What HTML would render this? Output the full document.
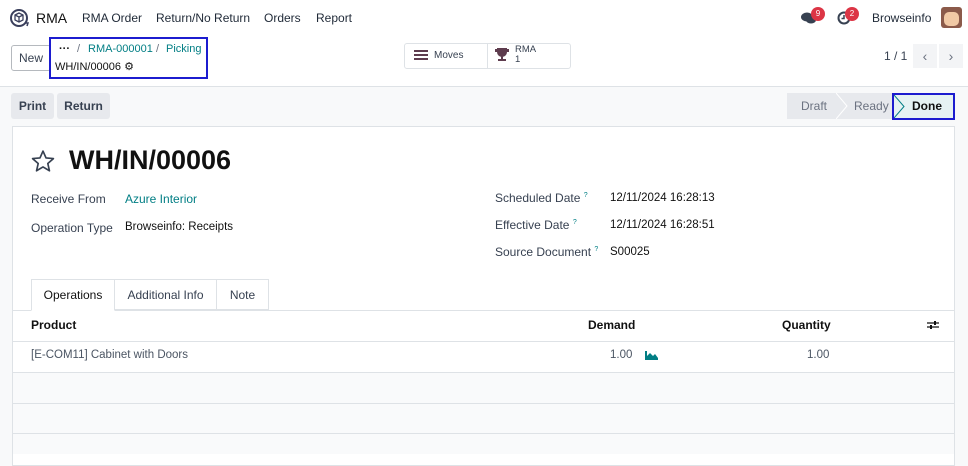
<!DOCTYPE html>
<html><head><meta charset="utf-8"><style>
*{box-sizing:border-box;margin:0;padding:0}
body{width:968px;height:454px;overflow:hidden;font-family:"Liberation Sans",sans-serif;font-size:12px;color:#374151;background:#f8f9fa;position:relative}
.a{position:absolute;white-space:nowrap}
.teal{color:#017e84}
</style></head><body>
<div class="a" style="left:0;top:0;width:968px;height:87px;background:#fff;border-bottom:1px solid #dee2e6"></div>
<svg class="a" style="left:9px;top:8px" width="22" height="20" viewBox="0 0 22 20"><circle cx="10" cy="10" r="8" fill="none" stroke="#3a3f5c" stroke-width="2"/><path d="M6 7l4-2 4 2v5l-4 2-4-2z M6 7l4 2 4-2 M10 9v5" fill="none" stroke="#3a3f5c" stroke-width="1.3"/><path d="M16 15l3 0-1 3" fill="none" stroke="#3a3f5c" stroke-width="1.5"/></svg>
<div class="a" style="left:36px;top:10px;font-size:14px;color:#111">RMA</div>
<div class="a" style="left:82px;top:11px;font-size:12px;color:#1f2937">RMA Order</div>
<div class="a" style="left:156px;top:11px;font-size:12px;color:#1f2937">Return/No Return</div>
<div class="a" style="left:264px;top:11px;font-size:12px;color:#1f2937">Orders</div>
<div class="a" style="left:316px;top:11px;font-size:12px;color:#1f2937">Report</div>
<svg class="a" style="left:801px;top:11px" width="16" height="14"><ellipse cx="6" cy="6" rx="6" ry="4.5" fill="#374151"/><ellipse cx="10" cy="9" rx="5" ry="3.5" fill="#374151"/></svg>
<div class="a" style="left:811px;top:7px;width:14px;height:14px;border-radius:7px;background:#dc3545;color:#fff;font-size:8px;text-align:center;line-height:14px">9</div>
<svg class="a" style="left:837px;top:11px" width="14" height="14"><circle cx="7" cy="7" r="5.5" fill="none" stroke="#374151" stroke-width="2"/><path d="M7 4v3.5h-2.5" stroke="#374151" stroke-width="1.5" fill="none"/></svg>
<div class="a" style="left:845px;top:7px;width:14px;height:14px;border-radius:7px;background:#dc3545;color:#fff;font-size:8px;text-align:center;line-height:14px">2</div>
<div class="a" style="left:872px;top:11px;font-size:12px;color:#1f2937">Browseinfo</div>
<div class="a" style="left:941px;top:7px;width:21px;height:21px;border-radius:3px;background:#8b5a4a;overflow:hidden"><div style="margin:5px 3px;width:15px;height:14px;background:#f1c9a5;border-radius:5px"></div></div>
<div class="a" style="left:11px;top:45px;width:40px;height:26px;border:1px solid #b5b9be;border-radius:3px;background:#fff;font-size:12px;line-height:24px;text-align:center;color:#374151">New</div>
<div class="a" style="left:49px;top:37px;width:159px;height:42px;border:2px solid #1c1ccf"></div>
<div class="a" style="left:59px;top:43px;font-size:11px;font-weight:bold;color:#111">···</div>
<div class="a" style="left:77px;top:43px;font-size:11px;color:#6b7280">/</div>
<div class="a teal" style="left:88px;top:43px;font-size:11px">RMA-000001</div>
<div class="a" style="left:156px;top:43px;font-size:11px;color:#6b7280">/</div>
<div class="a teal" style="left:166px;top:43px;font-size:11px">Picking</div>
<div class="a" style="left:55px;top:60px;font-size:11px;color:#111">WH/IN/00006 ⚙</div>
<div class="a" style="left:404px;top:43px;width:167px;height:26px;border:1px solid #dee2e6;border-radius:3px;background:#fff"></div>
<div class="a" style="left:487px;top:43px;width:1px;height:26px;background:#dee2e6"></div>
<div class="a" style="left:414px;top:50px;width:14px;height:2px;background:#5e3c4e;box-shadow:0 4px 0 #5e3c4e,0 8px 0 #5e3c4e"></div>
<div class="a" style="left:434px;top:50px;font-size:10px;color:#374151">Moves</div>
<svg class="a" style="left:494px;top:47px" width="16" height="15"><path d="M3 1h10v4a5 5 0 0 1-10 0z M1 2h2v3H1z M13 2h2v3h-2z M7 9h2v3H7z M4 12h8v2H4z" fill="#5e3c4e"/></svg>
<div class="a" style="left:515px;top:45px;font-size:9.5px;line-height:10px;color:#374151">RMA<br>1</div>
<div class="a" style="left:884px;top:49px;font-size:12px;color:#374151">1 / 1</div>
<div class="a" style="left:913px;top:44px;width:24px;height:24px;background:#f3f4f6;color:#6b7280;text-align:center;line-height:24px;font-size:14px">‹</div>
<div class="a" style="left:939px;top:44px;width:24px;height:24px;background:#f3f4f6;color:#6b7280;text-align:center;line-height:24px;font-size:14px">›</div>
<div class="a" style="left:11px;top:93px;width:43px;height:26px;background:#e7e9ed;border-radius:3px;font-weight:bold;font-size:12px;line-height:26px;text-align:center;color:#374151">Print</div>
<div class="a" style="left:57px;top:93px;width:53px;height:26px;background:#e7e9ed;border-radius:3px;font-weight:bold;font-size:12px;line-height:26px;text-align:center;color:#374151">Return</div>
<div class="a" style="left:787px;top:93px;width:106px;height:26px;background:#e7e9ed"></div>
<div class="a" style="left:801px;top:99px;font-size:12px;color:#6b7280">Draft</div>
<svg class="a" style="left:836px;top:93px" width="12" height="26"><path d="M0 0l11 13L0 26" fill="none" stroke="#fff" stroke-width="1"/></svg>
<div class="a" style="left:854px;top:99px;font-size:12px;color:#6b7280">Ready</div>
<div class="a" style="left:892px;top:93px;width:63px;height:27px;background:#e6f2f3;border:2px solid #1c1ccf"></div>
<svg class="a" style="left:894px;top:95px" width="12" height="23"><path d="M0 0l10 11.5L0 23" fill="none" stroke="#017e84" stroke-width="1"/></svg>
<div class="a" style="left:912px;top:99px;font-size:12px;font-weight:bold;color:#111">Done</div>
<div class="a" style="left:12px;top:126px;width:943px;height:340px;background:#fff;border:1px solid #dee2e6"></div>
<svg class="a" style="left:30px;top:149px" width="26" height="25" viewBox="0 0 24 24"><path d="M12 2l2.9 6.6 7.1.6-5.4 4.7 1.6 7-6.2-3.7-6.2 3.7 1.6-7L2 9.2l7.1-.6z" fill="none" stroke="#374151" stroke-width="1.6" stroke-linejoin="round"/></svg>
<div class="a" style="left:69px;top:145px;font-size:27px;font-weight:bold;color:#111">WH/IN/00006</div>
<div class="a" style="left:31px;top:192px;font-size:12px;color:#374151">Receive From</div>
<div class="a teal" style="left:125px;top:192px;font-size:12px">Azure Interior</div>
<div class="a" style="left:31px;top:221px;font-size:12px;color:#374151">Operation Type</div>
<div class="a" style="left:125px;top:221px;font-size:11.5px;color:#111">Browseinfo: Receipts</div>
<div class="a" style="left:495px;top:191px;font-size:12px">Scheduled Date <sup style="color:#017e84;font-size:7px">?</sup></div>
<div class="a" style="left:610px;top:192px;font-size:11.5px;color:#111">12/11/2024 16:28:13</div>
<div class="a" style="left:495px;top:218px;font-size:12px">Effective Date <sup style="color:#017e84;font-size:7px">?</sup></div>
<div class="a" style="left:610px;top:219px;font-size:11.5px;color:#111">12/11/2024 16:28:51</div>
<div class="a" style="left:495px;top:245px;font-size:12px">Source Document <sup style="color:#017e84;font-size:7px">?</sup></div>
<div class="a" style="left:610px;top:246px;font-size:11.5px;color:#111">S00025</div>
<div class="a" style="left:31px;top:279px;width:84px;height:32px;border:1px solid #dee2e6;border-bottom:1px solid #fff;background:#fff;font-size:12px;line-height:30px;text-align:center;color:#111;z-index:2">Operations</div>
<div class="a" style="left:115px;top:279px;width:102px;height:31px;border:1px solid #dee2e6;border-left:0;font-size:12px;line-height:30px;text-align:center">Additional Info</div>
<div class="a" style="left:216px;top:279px;width:53px;height:31px;border:1px solid #dee2e6;font-size:12px;line-height:30px;text-align:center">Note</div>
<div class="a" style="left:13px;top:310px;width:941px;height:1px;background:#dee2e6"></div>
<div class="a" style="left:31px;top:318px;font-size:12px;font-weight:bold;color:#111">Product</div>
<div class="a" style="left:588px;top:318px;font-size:12px;font-weight:bold;color:#111">Demand</div>
<div class="a" style="left:782px;top:318px;font-size:12px;font-weight:bold;color:#111">Quantity</div>
<svg class="a" style="left:927px;top:320px" width="12" height="10"><path d="M0 3h12M0 7h12" stroke="#111" stroke-width="1.3"/><rect x="7" y="1" width="2" height="4" fill="#111"/><rect x="3" y="5" width="2" height="4" fill="#111"/></svg>
<div class="a" style="left:13px;top:341px;width:941px;height:1px;background:#dee2e6"></div>
<div class="a" style="left:31px;top:349px;font-size:11.5px;color:#4b5563">[E-COM11] Cabinet with Doors</div>
<div class="a" style="left:610px;top:349px;font-size:11.5px;color:#4b5563">1.00</div>
<svg class="a" style="left:645px;top:351px" width="13" height="9"><path d="M0 0v9h13v-2l-3-4-2 2-3-3-3 3V0z" fill="#017e84"/></svg>
<div class="a" style="left:807px;top:349px;font-size:11.5px;color:#4b5563">1.00</div>
<div class="a" style="left:13px;top:372px;width:941px;height:1px;background:#dee2e6"></div>
<div class="a" style="left:13px;top:373px;width:941px;height:30px;background:#f9fafb"></div>
<div class="a" style="left:13px;top:403px;width:941px;height:1px;background:#dee2e6"></div>
<div class="a" style="left:13px;top:404px;width:941px;height:29px;background:#f9fafb"></div>
<div class="a" style="left:13px;top:433px;width:941px;height:1px;background:#dee2e6"></div>
<div class="a" style="left:13px;top:434px;width:941px;height:20px;background:#f9fafb"></div>
</body></html>
